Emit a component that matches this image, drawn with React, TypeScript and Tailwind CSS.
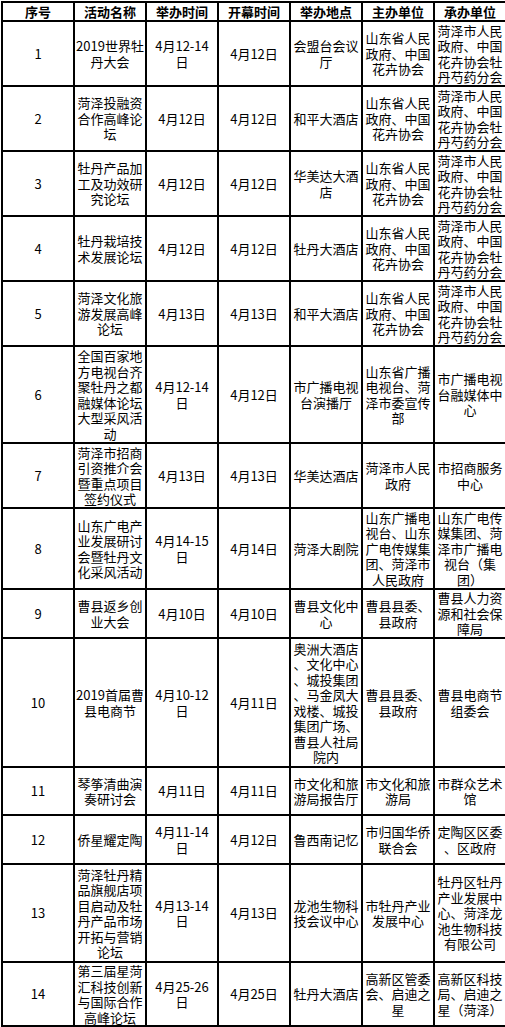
const headers = ['序号', '活动名称', '举办时间', '开幕时间', '举办地点', '主办单位', '承办单位']

const sdHost = '山东省人民\n政府、中国\n花卉协会'
const hzOrg = '菏泽市人民\n政府、中国\n花卉协会牡\n丹芍药分会'

// [height, cells]
const rows: [string, string[]][] = [
  ['h-[65px]', ['1', '2019世界牡\n丹大会', '4月12-14\n日', '4月12日', '会盟台会议\n厅', sdHost, hzOrg]],
  ['h-[65px]', ['2', '菏泽投融资\n合作高峰论\n坛', '4月12日', '4月12日', '和平大酒店', sdHost, hzOrg]],
  ['h-[65px]', ['3', '牡丹产品加\n工及功效研\n究论坛', '4月12日', '4月12日', '华美达大酒\n店', sdHost, hzOrg]],
  ['h-[65px]', ['4', '牡丹栽培技\n术发展论坛', '4月12日', '4月12日', '牡丹大酒店', sdHost, hzOrg]],
  ['h-[65px]', ['5', '菏泽文化旅\n游发展高峰\n论坛', '4月13日', '4月13日', '和平大酒店', sdHost, hzOrg]],
  ['h-[97px]', ['6', '全国百家地\n方电视台齐\n聚牡丹之都\n融媒体论坛\n大型采风活\n动', '4月12-14\n日', '4月12日', '市广播电视\n台演播厅', '山东省广播\n电视台、菏\n泽市委宣传\n部', '市广播电视\n台融媒体中\n心']],
  ['h-[65px]', ['7', '菏泽市招商\n引资推介会\n暨重点项目\n签约仪式', '4月13日', '4月13日', '华美达酒店', '菏泽市人民\n政府', '市招商服务\n中心']],
  ['h-[81px]', ['8', '山东广电产\n业发展研讨\n会暨牡丹文\n化采风活动', '4月14-15\n日', '4月14日', '菏泽大剧院', '山东广播电\n视台、山东\n广电传媒集\n团、菏泽市\n人民政府', '山东广电传\n媒集团、菏\n泽市广播电\n视台（集\n团）']],
  ['h-[49px]', ['9', '曹县返乡创\n业大会', '4月10日', '4月10日', '曹县文化中\n心', '曹县县委、\n县政府', '曹县人力资\n源和社会保\n障局']],
  ['h-[129px]', ['10', '2019首届曹\n县电商节', '4月10-12\n日', '4月11日', '奥洲大酒店\n、文化中心\n、城投集团\n、马金凤大\n戏楼、城投\n集团广场、\n曹县人社局\n院内', '曹县县委、\n县政府', '曹县电商节\n组委会']],
  ['h-[48px]', ['11', '琴筝清曲演\n奏研讨会', '4月11日', '4月11日', '市文化和旅\n游局报告厅', '市文化和旅\n游局', '市群众艺术\n馆']],
  ['h-[49px]', ['12', '侨星耀定陶', '4月11-14\n日', '4月12日', '鲁西南记忆', '市归国华侨\n联合会', '定陶区区委\n、区政府']],
  ['h-[98px]', ['13', '菏泽牡丹精\n品旗舰店项\n目启动及牡\n丹产品市场\n开拓与营销\n论坛', '4月13-14\n日', '4月13日', '龙池生物科\n技会议中心', '市牡丹产业\n发展中心', '牡丹区牡丹\n产业发展中\n心、菏泽龙\n池生物科技\n有限公司']],
  ['h-[64px]', ['14', '第三届星菏\n汇科技创新\n与国际合作\n高峰论坛', '4月25-26\n日', '4月25日', '牡丹大酒店', '高新区管委\n会、启迪之\n星', '高新区科技\n局、启迪之\n星（菏泽）']],
]

export default function App() {
  return (
    <div className="bg-white w-[505px] h-[1027px] overflow-hidden font-['Noto_Sans_CJK_SC',sans-serif] text-black">
      <table className="border-collapse table-fixed w-[504px] ml-[1px] mt-[1px] text-[13px] leading-[15.5px]">
        <colgroup>
          {headers.map((h) => (
            <col key={h} className="w-[72px]" />
          ))}
        </colgroup>
        <thead>
          <tr className="h-[19px]">
            {headers.map((h) => (
              <th key={h} className="border-2 border-black p-0 text-center align-middle font-bold">
                {h}
              </th>
            ))}
          </tr>
        </thead>
        <tbody>
          {rows.map(([height, cells], i) => (
            <tr key={i} className={height}>
              {cells.map((c, j) => (
                <td
                  key={j}
                  className="border-2 border-black p-0 text-center align-middle whitespace-pre-line"
                >
                  {c}
                </td>
              ))}
            </tr>
          ))}
        </tbody>
      </table>
    </div>
  )
}
